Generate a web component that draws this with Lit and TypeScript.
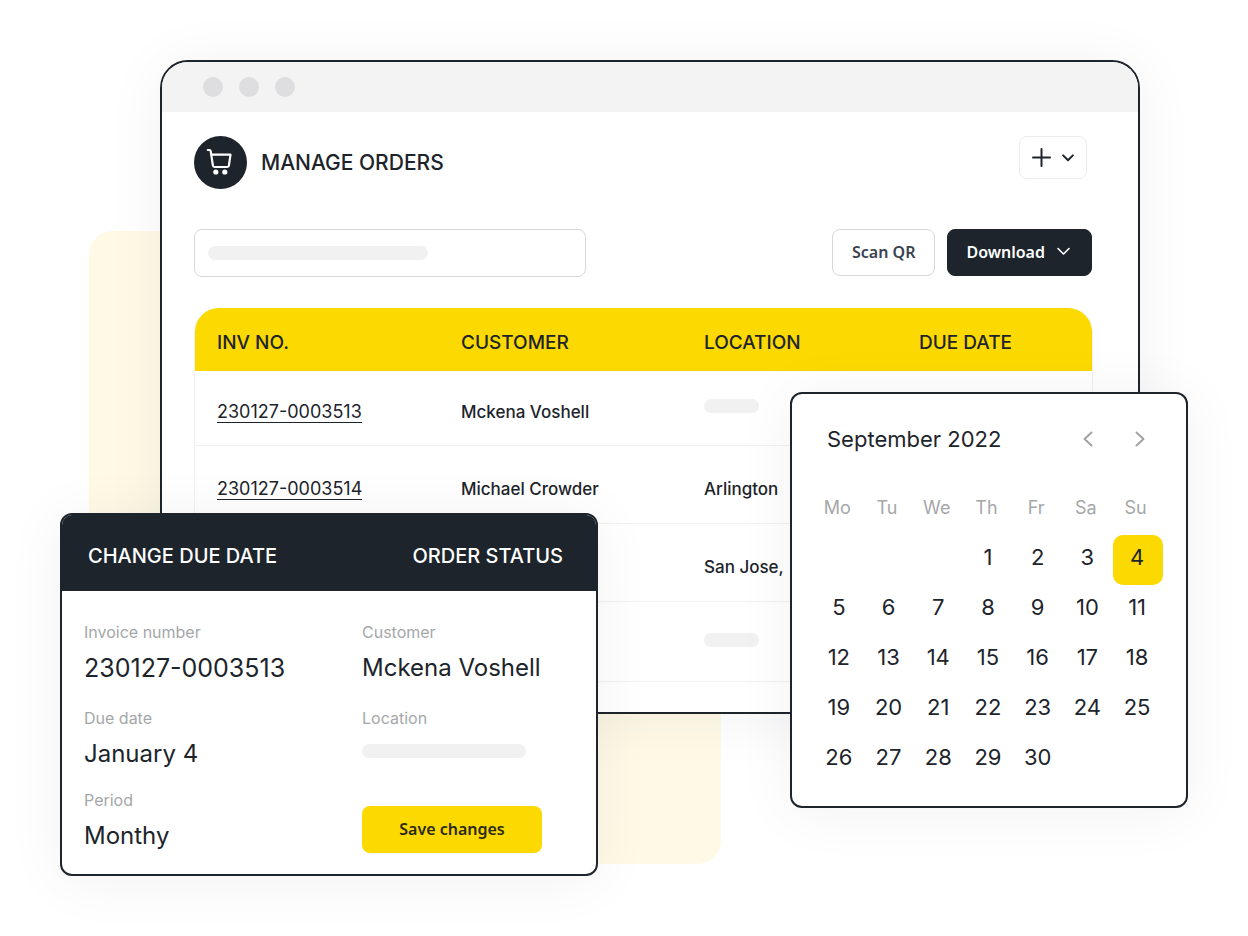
import { LitElement, html, css, svg, nothing } from "lit";
import { customElement, state } from "lit/decorators.js";
import { classMap } from "lit/directives/class-map.js";

interface Order {
  invoice: string;
  customer: string;
  location: string;
  due: string;
}

const ORDERS: Order[] = [
  { invoice: "230127-0003513", customer: "Mckena Voshell", location: "", due: "" },
  { invoice: "230127-0003514", customer: "Michael Crowder", location: "Arlington", due: "" },
  { invoice: "", customer: "", location: "San Jose,", due: "" },
  { invoice: "", customer: "", location: "", due: "" },
];

const shared = css`
  :host {
    display: block;
    box-sizing: border-box;
    font-family: Inter, "Liberation Sans", sans-serif;
    color: #1d242b;
  }
  *,
  *::before,
  *::after {
    box-sizing: border-box;
  }
  button {
    font: inherit;
    color: inherit;
    background: none;
    border: 0;
    margin: 0;
    padding: 0;
    cursor: pointer;
  }
  svg {
    display: block;
  }
  .skeleton {
    display: block;
    height: 14px;
    border-radius: 7px;
    background: #f1f1f1;
  }
`;

const chevronDown = svg`<path d="M1 1.5 6.5 7 12 1.5" fill="none" stroke="currentColor" stroke-linecap="round" stroke-linejoin="round"/>`;

@customElement("orders-window")
class OrdersWindow extends LitElement {
  static styles = [
    shared,
    css`
      :host {
        border: 2px solid #1d242b;
        border-radius: 28px 28px 12px 12px;
        background: #fff;
        overflow: hidden;
        box-shadow: 0 4px 60px rgba(29, 36, 43, 0.06);
      }
      .titlebar {
        display: flex;
        align-items: center;
        gap: 16px;
        height: 50px;
        padding: 0 41px;
        background: #f3f3f3;
      }
      .dot {
        width: 20px;
        height: 20px;
        border-radius: 50%;
        background: #dedee0;
      }
      .content {
        padding: 24px 45px 30px 32px;
      }
      .header {
        display: flex;
        justify-content: space-between;
        align-items: flex-start;
        padding-right: 6px;
      }
      .brand {
        display: flex;
        align-items: center;
        gap: 14px;
      }
      .badge {
        width: 53px;
        height: 53px;
      }
      h1 {
        margin: 0;
        font-size: 21px;
        line-height: 28px;
        font-weight: 500;
      }
      .add {
        display: flex;
        align-items: center;
        justify-content: center;
        gap: 11px;
        width: 68px;
        height: 43px;
        border: 1px solid #ececee;
        border-radius: 8px;
      }
      .toolbar {
        display: flex;
        align-items: flex-start;
        gap: 12px;
        margin: 40px 1px 31px 0;
      }
      .search {
        position: relative;
        flex: 0 1 392px;
        margin-right: auto;
      }
      .search input {
        display: block;
        width: 100%;
        height: 48px;
        padding: 0 14px;
        border: 1px solid #d6d7d9;
        border-radius: 8px;
        background: #fff;
        font: 16px/24px Inter, sans-serif;
      }
      .search .skeleton {
        position: absolute;
        left: 14px;
        top: 17px;
        width: 220px;
        pointer-events: none;
      }
      .btn {
        display: flex;
        align-items: center;
        justify-content: center;
        height: 47px;
        padding: 0 19px 2px;
        border: 1px solid #d6d7d9;
        border-radius: 8px;
        font-family: "Noto Sans", sans-serif;
        font-size: 16px;
        font-weight: 600;
        color: #3a4350;
      }
      .dark {
        gap: 12px;
        padding: 0 21px 2px 18px;
        background: #1d242b;
        border-color: #1d242b;
        color: #fff;
      }
      table {
        width: 100%;
        table-layout: fixed;
        border-collapse: separate;
        border-spacing: 0;
        border: 1px solid #f0f0f1;
        border-top: 0;
        border-bottom: 0;
        border-radius: 24px 24px 0 0;
      }
      .c1 {
        width: 244px;
      }
      .c2 {
        width: 243px;
      }
      .c3 {
        width: 215px;
      }
      th {
        height: 63px;
        padding: 6px 0 0 22px;
        text-align: left;
        font-size: 19px;
        font-weight: 500;
        line-height: 24px;
        background: #fcd900;
      }
      th:first-child {
        border-top-left-radius: 24px;
      }
      th:last-child {
        border-top-right-radius: 24px;
      }
      td {
        height: 78px;
        padding: 8px 0 0 22px;
        border-bottom: 1px solid #f1f1f2;
        font-size: 17px;
        font-weight: 500;
        line-height: 24px;
        white-space: nowrap;
      }
      tr:first-child td {
        height: 75px;
      }
      tr:last-child td {
        height: 80px;
      }
      td.empty {
        padding-top: 0;
        padding-bottom: 4px;
      }
      td .skeleton {
        width: 55px;
      }
      .link {
        color: inherit;
        font-size: 18px;
        font-weight: 400;
        text-decoration: none;
        border-bottom: 1px solid #1d242b;
      }
    `,
  ];

  render() {
    return html`
      <div class="titlebar">
        <span class="dot"></span><span class="dot"></span><span class="dot"></span>
      </div>
      <div class="content">
        <header class="header">
          <div class="brand">
            <svg class="badge" viewBox="0 0 53 53" aria-hidden="true">
              <circle cx="26.5" cy="26.5" r="26.5" fill="#1d242b" />
              <path
                d="M13.8 14h1.6c.7 0 1.2.4 1.3 1.1l2.2 14.4c.1 1 .8 1.5 1.7 1.5h12.6c.9 0 1.6-.5 1.7-1.5l1.6-10.8H17.4"
                fill="none"
                stroke="#fff"
                stroke-width="2.2"
                stroke-linecap="round"
                stroke-linejoin="round"
              />
              <circle cx="21.8" cy="36" r="2.6" fill="#fff" />
              <circle cx="30.8" cy="36" r="2.6" fill="#fff" />
            </svg>
            <h1>MANAGE ORDERS</h1>
          </div>
          <button class="add" aria-label="Add">
            <svg width="19" height="19" viewBox="0 0 19 19" aria-hidden="true">
              <path d="M9.5 1v17M1 9.5h17" stroke="#1d242b" stroke-width="2" stroke-linecap="round" />
            </svg>
            <svg width="12" height="8" viewBox="0 0 13 9" stroke-width="2.2" aria-hidden="true">${chevronDown}</svg>
          </button>
        </header>
        <div class="toolbar">
          <div class="search">
            <input type="search" aria-label="Search orders" />
            <span class="skeleton"></span>
          </div>
          <button class="btn">Scan QR</button>
          <button class="btn dark">
            Download
            <svg width="13" height="9" viewBox="0 0 13 9" stroke-width="1.6" aria-hidden="true">${chevronDown}</svg>
          </button>
        </div>
        <table>
          <colgroup>
            <col class="c1" />
            <col class="c2" />
            <col class="c3" />
            <col />
          </colgroup>
          <thead>
            <tr>
              <th scope="col">INV NO.</th>
              <th scope="col">CUSTOMER</th>
              <th scope="col">LOCATION</th>
              <th scope="col">DUE DATE</th>
            </tr>
          </thead>
          <tbody>
            ${ORDERS.map(
              (o) => html`<tr>
                <td>${o.invoice ? html`<a class="link" href="#${o.invoice}">${o.invoice}</a>` : nothing}</td>
                <td>${o.customer}</td>
                ${o.location
                  ? html`<td>${o.location}</td>`
                  : html`<td class="empty"><span class="skeleton"></span></td>`}
                <td>${o.due}</td>
              </tr>`
            )}
          </tbody>
        </table>
      </div>
    `;
  }
}

@customElement("due-date-card")
class DueDateCard extends LitElement {
  static styles = [
    shared,
    css`
      :host {
        border: 2px solid #1d242b;
        border-radius: 12px;
        background: #fff;
        overflow: hidden;
        box-shadow: 0 4px 60px rgba(29, 36, 43, 0.06);
      }
      .tabs {
        display: flex;
        justify-content: space-between;
        align-items: center;
        height: 76px;
        padding: 5px 33px 0 26px;
        background: #1d242b;
        color: #fff;
        font-size: 20px;
        line-height: 24px;
        font-weight: 500;
      }
      .body {
        display: grid;
        grid-template-columns: 278px 1fr;
        grid-template-rows: 86px 82px auto;
        padding: 31px 22px 21px;
      }
      .label {
        font-size: 16px;
        line-height: 20px;
        color: #a5a7a9;
      }
      .value {
        margin-top: 11px;
        font-size: 24px;
        line-height: 30px;
        white-space: nowrap;
      }
      .number {
        font-size: 25px;
      }
      .field .skeleton {
        width: 164px;
        margin-top: 16px;
      }
      .save {
        width: 180px;
        height: 47px;
        margin-top: 16px;
        padding-bottom: 2px;
        border-radius: 8px;
        background: #fcd900;
        font-family: "Noto Sans", sans-serif;
        font-size: 16px;
        font-weight: 600;
        color: #2c2a1a;
      }
    `,
  ];

  private field(label: string, value: string, number = false) {
    return html`<div class="field">
      <div class="label">${label}</div>
      ${value
        ? html`<div class=${classMap({ value: true, number })}>${value}</div>`
        : html`<span class="skeleton"></span>`}
    </div>`;
  }

  render() {
    return html`
      <div class="tabs">
        <button>CHANGE DUE DATE</button>
        <button>ORDER STATUS</button>
      </div>
      <div class="body">
        ${this.field("Invoice number", "230127-0003513", true)} ${this.field("Customer", "Mckena Voshell")}
        ${this.field("Due date", "January 4")} ${this.field("Location", "")} ${this.field("Period", "Monthy")}
        <div><button class="save">Save changes</button></div>
      </div>
    `;
  }
}

@customElement("month-calendar")
class MonthCalendar extends LitElement {
  @state() private selected = 4;

  static styles = [
    shared,
    css`
      :host {
        border: 2px solid #1d242b;
        border-radius: 12px;
        background: #fff;
        padding: 30px 23px 21px;
        box-shadow: 0 4px 60px rgba(29, 36, 43, 0.06);
      }
      .head {
        display: flex;
        align-items: center;
        padding: 0 15px 0 12px;
        margin-bottom: 44px;
      }
      h2 {
        flex: 1;
        margin: 0;
        font-size: 22px;
        line-height: 30px;
        font-weight: 400;
      }
      .nav {
        display: flex;
        gap: 36px;
        color: #a0a2a4;
      }
      table {
        width: 100%;
        table-layout: fixed;
        border-collapse: collapse;
      }
      th {
        height: 37px;
        padding: 0 5px 17px 0;
        font-size: 18px;
        line-height: 20px;
        font-weight: 400;
        color: #a5a7a9;
        text-align: center;
      }
      td {
        padding: 0;
      }
      .day {
        display: block;
        width: 100%;
        height: 50px;
        padding: 0 2px 6px 0;
        border-radius: 10px;
        font-size: 22px;
        line-height: 28px;
        text-align: center;
      }
      .selected {
        background: #fcd900;
      }
    `,
  ];

  render() {
    const offset = 3;
    const weeks = [0, 1, 2, 3, 4].map((w) =>
      [0, 1, 2, 3, 4, 5, 6].map((d) => w * 7 + d - offset + 1)
    );
    return html`
      <div class="head">
        <h2>September 2022</h2>
        <div class="nav">
          <button aria-label="Previous month">
            <svg width="16" height="20" viewBox="0 0 16 20" aria-hidden="true">
              <path d="M11.5 3.5 4.5 10l7 6.5" fill="none" stroke="currentColor" stroke-width="2" stroke-linecap="round" stroke-linejoin="round" />
            </svg>
          </button>
          <button aria-label="Next month">
            <svg width="16" height="20" viewBox="0 0 16 20" aria-hidden="true">
              <path d="M4.5 3.5l7 6.5-7 6.5" fill="none" stroke="currentColor" stroke-width="2" stroke-linecap="round" stroke-linejoin="round" />
            </svg>
          </button>
        </div>
      </div>
      <table>
        <thead>
          <tr>
            ${["Mo", "Tu", "We", "Th", "Fr", "Sa", "Su"].map((d) => html`<th scope="col">${d}</th>`)}
          </tr>
        </thead>
        <tbody>
          ${weeks.map(
            (week) => html`<tr>
              ${week.map((n) =>
                n < 1 || n > 30
                  ? html`<td></td>`
                  : html`<td>
                      <button
                        class=${classMap({ day: true, selected: n === this.selected })}
                        @click=${() => (this.selected = n)}
                      >${n}</button>
                    </td>`
              )}
            </tr>`
          )}
        </tbody>
      </table>
    `;
  }
}

@customElement("app-root")
class AppRoot extends LitElement {
  static styles = css`
    :host {
      display: block;
      position: relative;
      box-sizing: border-box;
      min-height: 100vh;
      padding: 60px 108px 60px 160px;
      background: #fff;
      overflow: hidden;
    }
    .backdrop {
      position: absolute;
      left: 89px;
      top: 231px;
      width: 632px;
      height: 633px;
      border-radius: 24px;
      background: #fff9e6;
    }
    .orders {
      position: relative;
    }
    .due {
      position: absolute;
      left: 60px;
      top: 513px;
      width: 538px;
    }
    .calendar {
      position: absolute;
      right: 60px;
      top: 392px;
      width: 398px;
    }
  `;

  render() {
    return html`
      <div class="backdrop"></div>
      <orders-window class="orders"></orders-window>
      <due-date-card class="due"></due-date-card>
      <month-calendar class="calendar"></month-calendar>
    `;
  }
}
